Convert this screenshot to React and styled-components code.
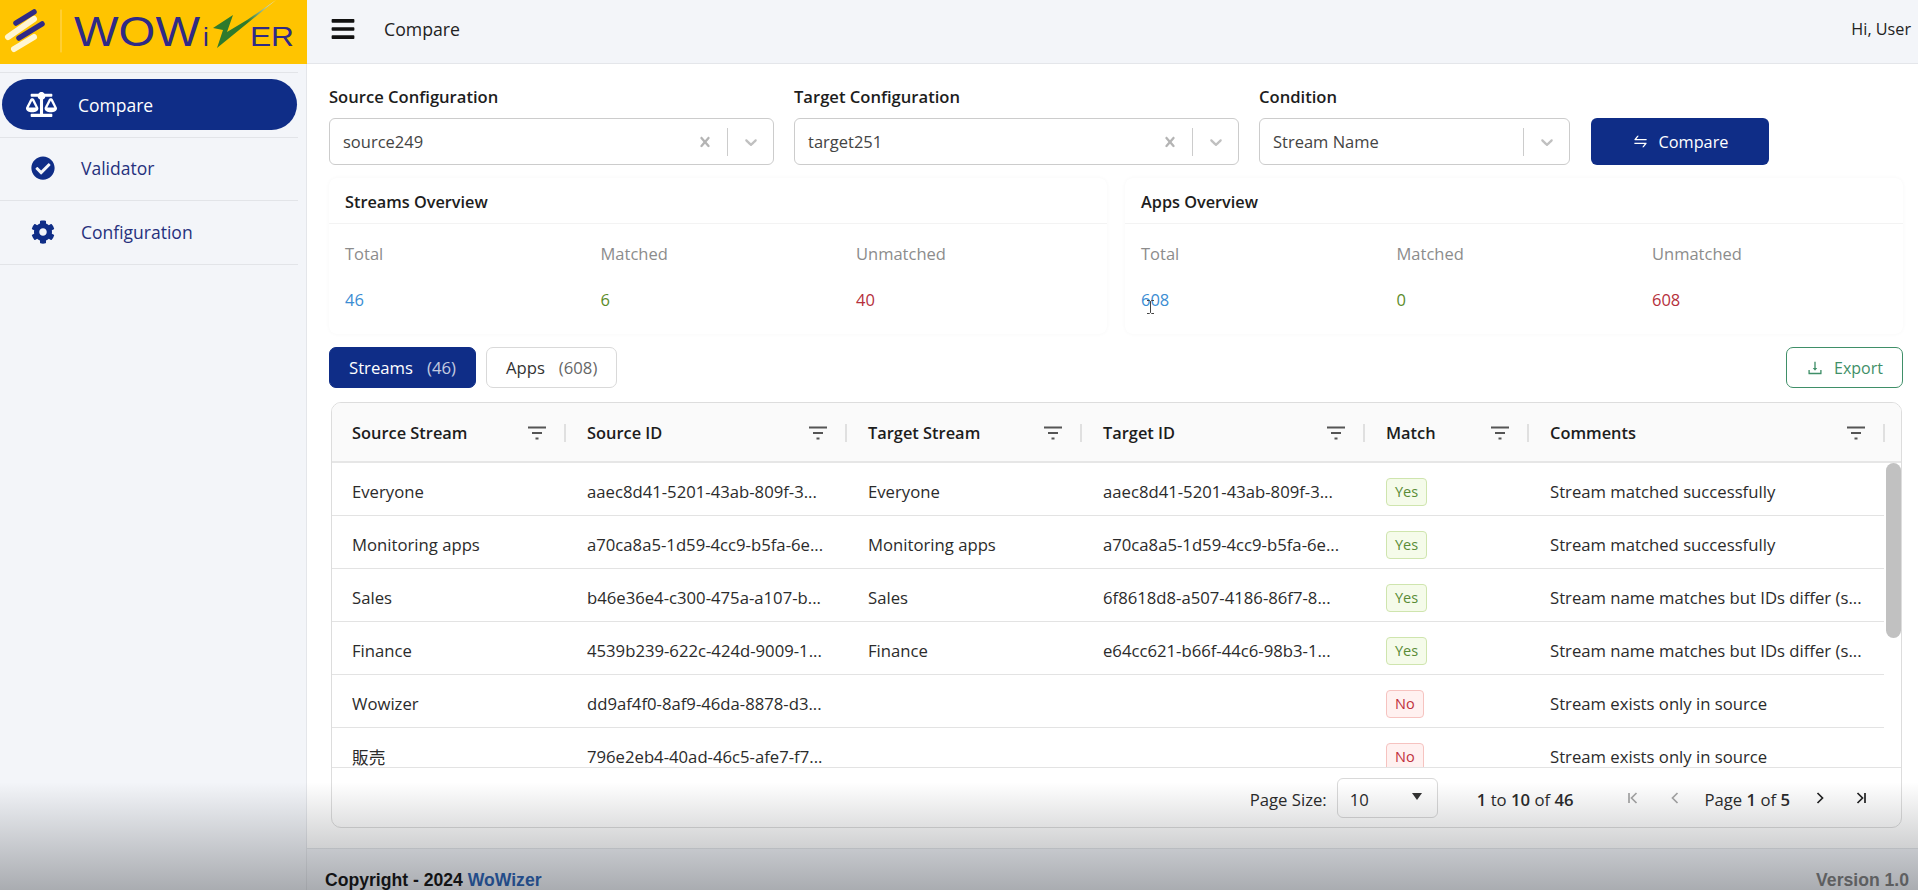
import React from "react";
import styled, { createGlobalStyle } from "styled-components";
import { FaBalanceScale, FaCheckCircle, FaCog, FaBars } from "react-icons/fa";
import { AiOutlineDownload, AiOutlineSwap } from "react-icons/ai";

const NAVY = "#0f2d87";
const PANEL = "#f3f5f9";

const GlobalStyle = createGlobalStyle`
  * { box-sizing: border-box; }
  html, body { margin: 0; padding: 0; height: 100%; }
  body {
    font-family: "Open Sans", "Noto Sans CJK JP", sans-serif;
    font-size: 16px;
    color: #222;
    background: #fff;
    overflow: hidden;
  }
`;

const columns = [
  { title: "Source Stream", width: 235 },
  { title: "Source ID", width: 281 },
  { title: "Target Stream", width: 235 },
  { title: "Target ID", width: 283 },
  { title: "Match", width: 164 },
  { title: "Comments", width: 356 },
];

const rows = [
  ["Everyone", "aaec8d41-5201-43ab-809f-3...", "Everyone", "aaec8d41-5201-43ab-809f-3...", "Yes", "Stream matched successfully"],
  ["Monitoring apps", "a70ca8a5-1d59-4cc9-b5fa-6e...", "Monitoring apps", "a70ca8a5-1d59-4cc9-b5fa-6e...", "Yes", "Stream matched successfully"],
  ["Sales", "b46e36e4-c300-475a-a107-b...", "Sales", "6f8618d8-a507-4186-86f7-8...", "Yes", "Stream name matches but IDs differ (s..."],
  ["Finance", "4539b239-622c-424d-9009-1...", "Finance", "e64cc621-b66f-44c6-98b3-1...", "Yes", "Stream name matches but IDs differ (s..."],
  ["Wowizer", "dd9af4f0-8af9-46da-8878-d3...", "", "", "No", "Stream exists only in source"],
  ["販売", "796e2eb4-40ad-46c5-afe7-f7...", "", "", "No", "Stream exists only in source"],
];

const overviews = [
  { title: "Streams Overview", total: 46, matched: 6, unmatched: 40 },
  { title: "Apps Overview", total: 608, matched: 0, unmatched: 608 },
];

const Chevron = () => (
  <svg width="20" height="20" viewBox="0 0 20 20" fill="currentColor">
    <path d="M4.516 7.548c0.436-0.446 1.043-0.481 1.576 0l3.908 3.747 3.908-3.747c0.533-0.481 1.141-0.446 1.574 0 0.436 0.445 0.408 1.197 0 1.615-0.406 0.418-4.695 4.502-4.695 4.502-0.217 0.223-0.502 0.335-0.787 0.335s-0.57-0.112-0.789-0.335c0 0-4.287-4.084-4.695-4.502s-0.436-1.17 0-1.615z" />
  </svg>
);

const Cross = () => (
  <svg width="22" height="22" viewBox="0 0 20 20" fill="#b4b4b4">
    <path d="M14.348 14.849c-0.469 0.469-1.229 0.469-1.697 0l-2.651-3.030-2.651 3.029c-0.469 0.469-1.229 0.469-1.697 0-0.469-0.469-0.469-1.229 0-1.697l2.758-3.15-2.759-3.152c-0.469-0.469-0.469-1.228 0-1.697s1.228-0.469 1.697 0l2.652 3.031 2.651-3.031c0.469-0.469 1.228-0.469 1.697 0s0.469 1.229 0 1.697l-2.758 3.152 2.758 3.15c0.469 0.469 0.469 1.229 0 1.698z" />
  </svg>
);

const FilterIcon = () => (
  <svg width="18" height="14" viewBox="0 0 18 14" fill="none" stroke="#555" strokeWidth="1.8">
    <path d="M0 1.500h18M4 7h10M7.500 12.500h3" />
  </svg>
);

const PagerIcon = ({ d }) => (
  <svg width="16" height="16" viewBox="0 0 16 16" fill="none" stroke="currentColor" strokeWidth="1.7">
    <path d={d} />
  </svg>
);

const Logo = () => (
  <svg width="307" height="64" viewBox="0 0 307 64">
    <defs>
      <linearGradient id="bolt" x1="0" y1="1" x2="1" y2="0">
        <stop offset="0.55" stopColor="#2f7a2c" />
        <stop offset="1" stopColor="#f2f2f2" />
      </linearGradient>
    </defs>
    <g fill="none" strokeLinecap="round">
      <path d="M16 23L34 12" stroke="#2f2a86" strokeWidth="5.500" />
      <path d="M8 37L34 19" stroke="#fff6d2" strokeWidth="6" />
      <path d="M19 38L42 24" stroke="#2f2a86" strokeWidth="5.500" />
      <path d="M14 49L34 37" stroke="#fff6d2" strokeWidth="6" />
      <path d="M61 10V52" stroke="#ffd966" strokeWidth="1" />
    </g>
    <g fill="#2f2a86" fontFamily="Liberation Sans, sans-serif">
      <text x="74" y="46" fontSize="42" textLength="126" lengthAdjust="spacingAndGlyphs">WOW</text>
      <text x="203" y="46" fontSize="26">i</text>
      <text x="250" y="46" fontSize="27" textLength="44" lengthAdjust="spacingAndGlyphs">ER</text>
    </g>
    <polygon points="213,28 233,15 227,32 247,20 276,0 217,48 223,30" fill="url(#bolt)" />
  </svg>
);

const App = () => {
  return (
    <>
      <GlobalStyle />
      <Page>
        <Sidebar>
          <LogoBox>
            <Logo />
          </LogoBox>
          <Nav>
            <NavItem $active>
              <NavIcon $active>
                <FaBalanceScale size={31} />
              </NavIcon>
              Compare
            </NavItem>
            <NavItem>
              <NavIcon>
                <FaCheckCircle size={24} />
              </NavIcon>
              Validator
            </NavItem>
            <NavItem>
              <NavIcon>
                <FaCog size={24} />
              </NavIcon>
              Configuration
            </NavItem>
          </Nav>
        </Sidebar>

        <Main>
          <TopBar>
            <Burger>
              <FaBars size={26} />
            </Burger>
            <PageTitle>Compare</PageTitle>
            <Greeting>Hi, User</Greeting>
          </TopBar>

          <Content>
            <FormRow>
              <Field $width={445}>
                <FieldLabel>Source Configuration</FieldLabel>
                <SelectBox>
                  <SelectValue>source249</SelectValue>
                  <Indicator><Cross /></Indicator>
                  <IndicatorLine />
                  <Indicator><Chevron /></Indicator>
                </SelectBox>
              </Field>
              <Field $width={445}>
                <FieldLabel>Target Configuration</FieldLabel>
                <SelectBox>
                  <SelectValue>target251</SelectValue>
                  <Indicator><Cross /></Indicator>
                  <IndicatorLine />
                  <Indicator><Chevron /></Indicator>
                </SelectBox>
              </Field>
              <Field $width={311}>
                <FieldLabel>Condition</FieldLabel>
                <SelectBox>
                  <SelectValue>Stream Name</SelectValue>
                  <IndicatorLine />
                  <Indicator><Chevron /></Indicator>
                </SelectBox>
              </Field>
              <CompareButton>
                <AiOutlineSwap size={17} />
                Compare
              </CompareButton>
            </FormRow>

            <OverviewRow>
              {overviews.map((o) => (
                <OverviewCard key={o.title}>
                  <CardTitle>{o.title}</CardTitle>
                  <CardGrid>
                    <Stat>
                      <StatLabel>Total</StatLabel>
                      <StatValue $color="#3b8dd3">{o.total}</StatValue>
                    </Stat>
                    <Stat>
                      <StatLabel>Matched</StatLabel>
                      <StatValue $color="#5b8c2a">{o.matched}</StatValue>
                    </Stat>
                    <Stat>
                      <StatLabel>Unmatched</StatLabel>
                      <StatValue $color="#b5303c">{o.unmatched}</StatValue>
                    </Stat>
                  </CardGrid>
                </OverviewCard>
              ))}
            </OverviewRow>

            <TabRow>
              <TabButton $active>
                Streams<TabCount>(46)</TabCount>
              </TabButton>
              <TabButton>
                Apps<TabCount>(608)</TabCount>
              </TabButton>
              <ExportButton>
                <AiOutlineDownload size={18} />
                Export
              </ExportButton>
            </TabRow>

            <TableWrap>
              <HeaderRow>
                {columns.map((c) => (
                  <HeaderCell key={c.title} $width={c.width}>
                    <span>{c.title}</span>
                    <FilterIcon />
                    <Resizer />
                  </HeaderCell>
                ))}
              </HeaderRow>
              <TableBody>
                {rows.map((r, i) => (
                  <Row key={i}>
                    {r.map((v, j) => (
                      <Cell key={j} $width={columns[j].width}>
                        {j === 4 ? <Tag $yes={v === "Yes"}>{v}</Tag> : v}
                      </Cell>
                    ))}
                  </Row>
                ))}
                <ScrollThumb />
              </TableBody>
              <Pager>
                <PagerText $gap={10}>Page Size:</PagerText>
                <PageSize>
                  10
                  <Caret />
                </PageSize>
                <PagerText $left={39} $gap={51}>
                  <b>1</b> to <b>10</b> of <b>46</b>
                </PagerText>
                <PagerButton $muted $gap={26}>
                  <PagerIcon d="M4 3v10M11.500 3L6.500 8l5 5" />
                </PagerButton>
                <PagerButton $muted $gap={22}>
                  <PagerIcon d="M10.500 3L5.500 8l5 5" />
                </PagerButton>
                <PagerText $gap={22}>
                  Page <b>1</b> of <b>5</b>
                </PagerText>
                <PagerButton $gap={25}>
                  <PagerIcon d="M5.500 3l5 5-5 5" />
                </PagerButton>
                <PagerButton>
                  <PagerIcon d="M12 3v10M4.500 3l5 5-5 5" />
                </PagerButton>
              </Pager>
            </TableWrap>
          </Content>

          <Footer>
            <Copyright>
              Copyright - 2024 <span>WoWizer</span>
            </Copyright>
            <Version>Version 1.0</Version>
          </Footer>
        </Main>

        <TextCursor width="9" height="14" viewBox="0 0 9 14" fill="none" stroke="#444" strokeWidth="1">
          <path d="M1 .5h2.500l1 1 1-1H8M4.500 1.500v11M1 13.500h2.500l1-1 1 1H8" />
        </TextCursor>
        <BottomShade />
      </Page>
    </>
  );
};

const Page = styled.div`
  position: relative;
  display: flex;
  width: 100%;
  height: 100vh;
  overflow: hidden;
`;

const BottomShade = styled.div`
  position: absolute;
  left: 0;
  right: 0;
  bottom: 0;
  height: 108px;
  pointer-events: none;
  background: linear-gradient(to bottom, rgba(20, 24, 30, 0), rgba(20, 24, 30, 0.33));
`;

const TextCursor = styled.svg`
  position: absolute;
  left: 1146px;
  top: 300px;
`;

const Sidebar = styled.aside`
  width: 307px;
  flex: none;
  background: ${PANEL};
  border-right: 1px solid #e4e6ea;
`;

const LogoBox = styled.div`
  height: 64px;
  background: #ffc400;
  margin-right: -1px;
  overflow: hidden;

  svg {
    display: block;
  }
`;

const Nav = styled.nav`
  margin-top: 8px;
  width: 298px;
  border-top: 1px solid #e2e4e8;
`;

const NavItem = styled.div`
  position: relative;
  height: 64px;
  display: flex;
  align-items: center;
  padding-bottom: 1px;
  border-bottom: 1px solid #e2e4e8;
  font-size: 17.5px;
  color: ${(p) => (p.$active ? "#fff" : "#26317d")};

  ${(p) =>
    p.$active &&
    `
    margin-left: 2px;
    margin-right: 1px;
    height: 51px;
    margin-top: 6px;
    margin-bottom: 7px;
    padding-bottom: 0;
    border-bottom: none;
    border-radius: 26px;
    background: ${NAVY};
    &::after {
      content: "";
      position: absolute;
      left: -2px;
      right: -1px;
      bottom: -8px;
      border-bottom: 1px solid #e2e4e8;
    }
  `}
`;

const NavIcon = styled.span`
  display: flex;
  justify-content: center;
  width: ${(p) => (p.$active ? "76px" : "81px")};
  padding-left: ${(p) => (p.$active ? "3px" : "4px")};
  color: ${(p) => (p.$active ? "#fff" : NAVY)};
`;

const Main = styled.main`
  flex: 1;
  min-width: 0;
  display: flex;
  flex-direction: column;
`;

const TopBar = styled.header`
  height: 64px;
  flex: none;
  display: flex;
  align-items: center;
  padding: 0 7px 5px 23px;
  background: ${PANEL};
  border-bottom: 1px solid #e4e6ea;
`;

const Burger = styled.span`
  display: flex;
  color: #111;
`;

const PageTitle = styled.span`
  margin-left: 28px;
  font-size: 17.7px;
  color: #222;
`;

const Greeting = styled.span`
  margin-left: auto;
  font-size: 16.2px;
  color: #222;
`;

const Content = styled.div`
  flex: 1;
  min-height: 0;
  display: flex;
  flex-direction: column;
  padding: 21px 15px 0 22px;
`;

const FormRow = styled.div`
  display: flex;
  align-items: flex-end;
  gap: 20px;
`;

const Field = styled.div`
  width: ${(p) => p.$width}px;
`;

const FieldLabel = styled.div`
  font-size: 16.6px;
  font-weight: 600;
  color: #1d1d1d;
  line-height: 24px;
  margin-bottom: 9px;
`;

const SelectBox = styled.div`
  height: 47px;
  display: flex;
  align-items: center;
  padding: 0 8px 0 13px;
  background: #fff;
  border: 1px solid #ccc;
  border-radius: 6px;
  color: #c0c0c0;
`;

const SelectValue = styled.span`
  flex: 1;
  font-size: 16.5px;
  color: #444;
`;

const Indicator = styled.span`
  display: flex;
  width: 20px;
  margin: 0 4px;
`;

const IndicatorLine = styled.span`
  width: 1px;
  height: 28px;
  margin: 0 9px 0 8px;
  background: #ccc;
`;

const CompareButton = styled.button`
  width: 178px;
  height: 47px;
  margin-left: 1px;
  display: flex;
  align-items: center;
  justify-content: center;
  gap: 10px;
  border: none;
  border-radius: 6px;
  background: ${NAVY};
  color: #fff;
  font: inherit;
  font-size: 16.3px;
`;

const OverviewRow = styled.div`
  display: grid;
  grid-template-columns: 778px 778px;
  gap: 18px;
  margin-top: 13px;
`;

const OverviewCard = styled.section`
  height: 156px;
  border-radius: 8px;
  background: #fff;
  box-shadow: 0 0 4px rgba(0, 0, 0, 0.035);
`;

const CardTitle = styled.div`
  height: 46px;
  display: flex;
  align-items: center;
  padding: 2px 16px 0;
  border-bottom: 1px solid #f3f3f3;
  font-size: 16.3px;
  font-weight: 600;
  color: #1d1d1d;
`;

const CardGrid = styled.div`
  display: grid;
  grid-template-columns: repeat(3, 255.5px);
  padding: 18px 16px 0;
`;

const Stat = styled.div`
  display: flex;
  flex-direction: column;
  gap: 22px;
`;

const StatLabel = styled.span`
  font-size: 16.5px;
  line-height: 24px;
  color: #8c8c8c;
`;

const StatValue = styled.span`
  font-size: 16.5px;
  line-height: 24px;
  color: ${(p) => p.$color};
`;

const TabRow = styled.div`
  display: flex;
  align-items: center;
  gap: 10px;
  margin-top: 13px;
`;

const TabButton = styled.button`
  height: 41px;
  padding: 0 19px;
  display: flex;
  align-items: center;
  border: 1px solid ${(p) => (p.$active ? NAVY : "#d9d9d9")};
  border-radius: 7px;
  background: ${(p) => (p.$active ? NAVY : "#fff")};
  color: ${(p) => (p.$active ? "#fff" : "#333")};
  font: inherit;
  font-size: 16.7px;
`;

const TabCount = styled.span`
  margin-left: 14px;
  opacity: 0.75;
`;

const ExportButton = styled.button`
  margin-left: auto;
  width: 117px;
  height: 41px;
  display: flex;
  align-items: center;
  justify-content: center;
  gap: 10px;
  border: 1px solid #3f8f68;
  border-radius: 7px;
  background: #fff;
  color: #3f8f68;
  font: inherit;
  font-size: 16px;
`;

const TableWrap = styled.div`
  width: 1571px;
  height: 426px;
  margin: 14px 0 0 2px;
  display: flex;
  flex-direction: column;
  border: 1px solid #dddddd;
  border-radius: 10px;
  background: #fff;
  overflow: hidden;
`;

const HeaderRow = styled.div`
  height: 60px;
  flex: none;
  display: flex;
  background: #fafafa;
  border-bottom: 2px solid #e6e6e6;
`;

const HeaderCell = styled.div`
  position: relative;
  flex: none;
  width: ${(p) => p.$width}px;
  display: flex;
  align-items: center;
  justify-content: space-between;
  padding: 1px 21px 0 20px;
  font-size: 16.4px;
  font-weight: 600;
  color: #1d1d1d;
`;

const Resizer = styled.span`
  position: absolute;
  right: 1px;
  top: 21px;
  width: 2px;
  height: 18px;
  background: #e0e0e0;
`;

const TableBody = styled.div`
  position: relative;
  flex: 1;
  min-height: 0;
  padding-right: 17px;
  overflow: hidden;
`;

const ScrollThumb = styled.div`
  position: absolute;
  top: 0;
  right: 0;
  width: 15px;
  height: 175px;
  border-radius: 8px;
  background: #c1c1c1;
`;

const Row = styled.div`
  height: 53px;
  display: flex;
  align-items: center;
  padding-top: 5px;
  border-bottom: 1px solid #e3e3e3;
`;

const Cell = styled.div`
  flex: none;
  width: ${(p) => p.$width}px;
  padding-left: 20px;
  font-size: 16.7px;
  color: #2b2b2b;
  white-space: nowrap;
`;

const Tag = styled.span`
  display: inline-block;
  height: 28px;
  padding: 0 8px;
  line-height: 26px;
  font-size: 14.5px;
  border-radius: 4px;
  border: 1px solid ${(p) => (p.$yes ? "#cfe5ae" : "#f6c3c0")};
  background: ${(p) => (p.$yes ? "#f5fbea" : "#fff1f0")};
  color: ${(p) => (p.$yes ? "#5a8c36" : "#c0303c")};
`;

const Pager = styled.div`
  height: 60px;
  flex: none;
  display: flex;
  align-items: center;
  justify-content: flex-end;
  padding-right: 32px;
  border-top: 1px solid #e3e3e3;
  font-size: 16.7px;
  color: #2b2b2b;

  b {
    font-weight: 600;
  }
`;

const PagerText = styled.span`
  padding-top: 4px;
  margin-left: ${(p) => p.$left || 0}px;
  margin-right: ${(p) => p.$gap || 0}px;
`;

const PageSize = styled.div`
  width: 101px;
  height: 40px;
  display: flex;
  align-items: center;
  justify-content: space-between;
  padding: 3px 15px 0 12px;
  border: 1px solid #d9d9d9;
  border-radius: 6px;
`;

const Caret = styled.span`
  width: 0;
  height: 0;
  margin-bottom: 5px;
  border-left: 5px solid transparent;
  border-right: 5px solid transparent;
  border-top: 7px solid #333;
`;

const PagerButton = styled.span`
  display: flex;
  margin-right: ${(p) => p.$gap || 0}px;
  color: ${(p) => (p.$muted ? "#a6a6a6" : "#222")};
`;

const Footer = styled.footer`
  height: 42px;
  flex: none;
  display: flex;
  align-items: flex-end;
  justify-content: space-between;
  padding: 0 9px 0 18px;
  background: ${PANEL};
  border-top: 1px solid #e4e6ea;
  font-family: "Liberation Sans", Arial, sans-serif;
  font-weight: 700;
  font-size: 17.6px;
  line-height: 20px;
`;

const Copyright = styled.span`
  color: #111;

  span {
    color: #2a62b5;
  }
`;

const Version = styled.span`
  color: #7d7d7d;
`;

export default App;
